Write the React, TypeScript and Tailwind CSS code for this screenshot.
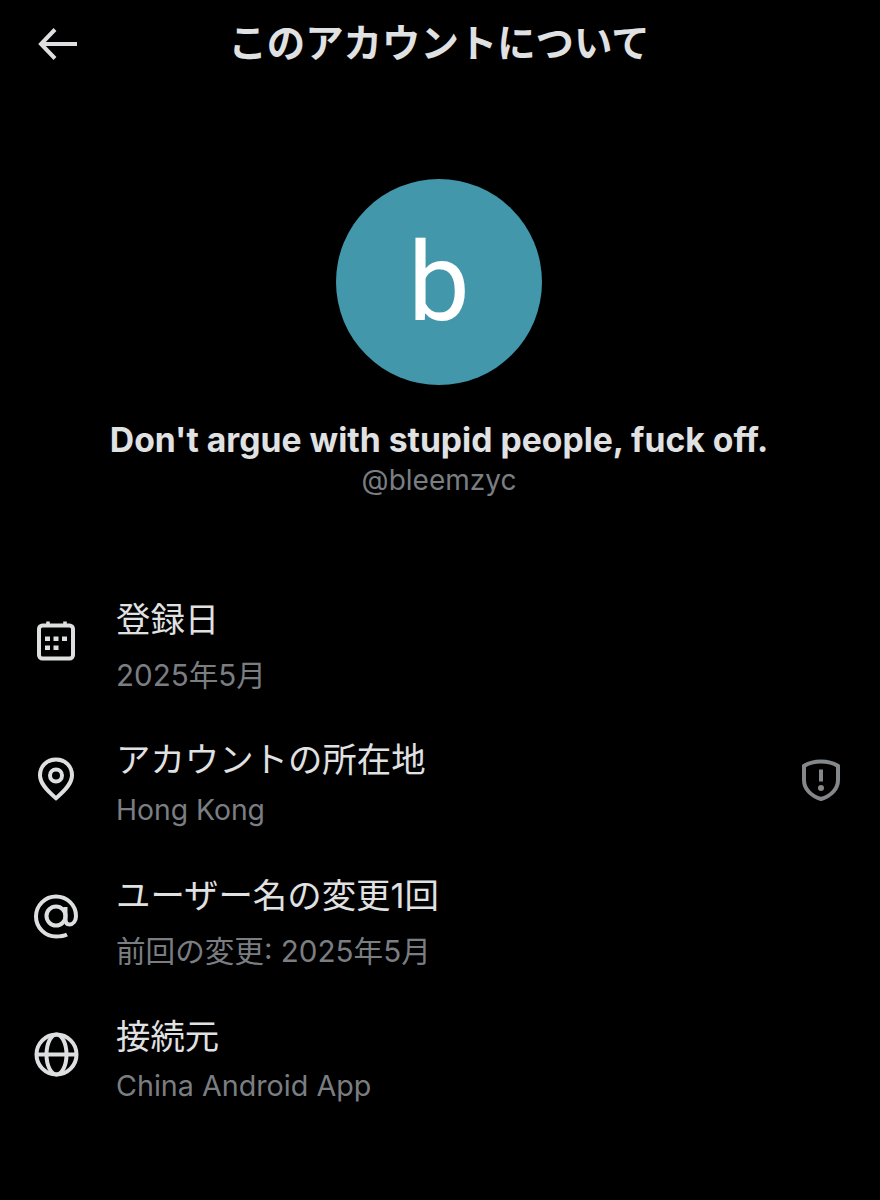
const F = "font-['Inter','Noto_Sans_CJK_JP',sans-serif]";
const C = "#dedfe0";

function Back() {
  return (
    <svg width="44" height="44" viewBox="0 0 44 44" fill="none" stroke={C} strokeWidth="4">
      <path d="M41 22H5M19 7.500L5 22l14 14.500" />
    </svg>
  );
}
function Calendar() {
  return (
    <svg width="48" height="48" viewBox="0 0 48 48" fill="none">
      <rect x="7" y="7.500" width="34" height="33" rx="3.500" stroke={C} strokeWidth="4" />
      <path d="M16 3.500v5M33 3.500v5" stroke={C} strokeWidth="3.600" />
      <path d="M13 18.500h5v4.500h-5zM21.500 18.500h5v4.500h-5zM30 18.500h5v4.500h-5zM13 27.500h5v4.500h-5zM21.500 27.500h5v4.500h-5z" fill={C} />
    </svg>
  );
}
function Pin() {
  return (
    <svg width="48" height="48" viewBox="0 0 48 48" fill="none" stroke={C} strokeWidth="4">
      <path d="M24 3.500c9.600 0 16 7 16 15.700 0 7.200-5 13.600-16 23-11-9.400-16-15.800-16-23C8 10.500 14.400 3.500 24 3.500z" />
      <circle cx="24" cy="19.500" r="6" />
    </svg>
  );
}
function At() {
  return (
    <svg width="48" height="48" viewBox="0 0 48 48" fill="none" stroke={C} strokeWidth="4">
      <circle cx="24" cy="22" r="9.500" />
      <path d="M35 40.500C32 42 29 42.500 24 42.500 13 42.500 4 33.500 4 22.500S13 2.500 24 2.500 44 11 44 22c0 5-3 8.500-6.500 8.500-3 0-4-2.500-4-5.500V13" />
    </svg>
  );
}
function Globe() {
  return (
    <svg width="48" height="48" viewBox="0 0 48 48" fill="none" stroke={C} strokeWidth="4">
      <circle cx="24.500" cy="22.500" r="20" />
      <ellipse cx="24.500" cy="22.500" rx="10" ry="20" />
      <path d="M4.500 22.500h40" />
    </svg>
  );
}
function Shield() {
  return (
    <svg width="44" height="44" viewBox="0 0 44 44" fill="none">
      <path d="M22 3.500c6 0 12.500 1.500 17 4.500v14c0 9-7 16-17 19C12 38 5 31 5 22V8c4.500-3 11-4.500 17-4.500z" stroke="#85888b" strokeWidth="4" />
      <path d="M20 11.500h4v12h-4z" fill="#85888b" />
      <circle cx="22" cy="30" r="3" fill="#85888b" />
    </svg>
  );
}

function Row({ icon, title, sub, right, subClass }: { icon: React.ReactNode; title: string; sub: string; right?: React.ReactNode; subClass: string }) {
  return (
    <div className="flex items-center pl-[32px] pr-[37px] h-[138px]">
      <div className="w-[85px] shrink-0 mb-[9px]">{icon}</div>
      <div className="flex-1 ml-[-1px]">
        <div className="text-[34.400px] leading-[40px] text-[#e0e1e2]">{title}</div>
        <div className={`leading-[36px] text-[#7a7e82] ${subClass}`}>{sub}</div>
      </div>
      <div className="mb-[9px]">{right}</div>
    </div>
  );
}

export default function App() {
  return (
    <div className={`w-[880px] h-[1200px] bg-black overflow-hidden ${F}`}>
      <div className="flex items-center h-[88px] pl-[36px]">
        <Back />
        <div className="flex-1 pr-[82px] text-center text-[38.400px] font-bold text-[#e0e1e2]">このアカウントについて</div>
      </div>
      <div className="flex flex-col items-center mt-[91px] pr-[2px]">
        <div className="w-[206px] h-[206px] rounded-full bg-[#4297ab] flex items-center justify-center text-white text-[110px] font-['Roboto',sans-serif]">b</div>
        <div className="text-[33.700px] leading-[40px] font-bold text-[#e0e1e2] mt-[35px]">Don't argue with stupid people, fuck off.</div>
        <div className="text-[28px] leading-[36px] text-[#7a7e82] mt-[2px]">@bleemzyc</div>
      </div>
      <div className="mt-[79px] flex flex-col">
        <Row subClass="mt-[17px] text-[29.600px]" icon={<Calendar />} title="登録日" sub="2025年5月" />
        <Row subClass="mt-[12px] text-[28.300px]" icon={<Pin />} title="アカウントの所在地" sub="Hong Kong" right={<Shield />} />
        <Row subClass="mt-[17px] text-[29.600px]" icon={<At />} title="ユーザー名の変更1回" sub="前回の変更: 2025年5月" />
        <Row subClass="mt-[11px] text-[28.700px]" icon={<Globe />} title="接続元" sub="China Android App" />
      </div>
    </div>
  );
}
